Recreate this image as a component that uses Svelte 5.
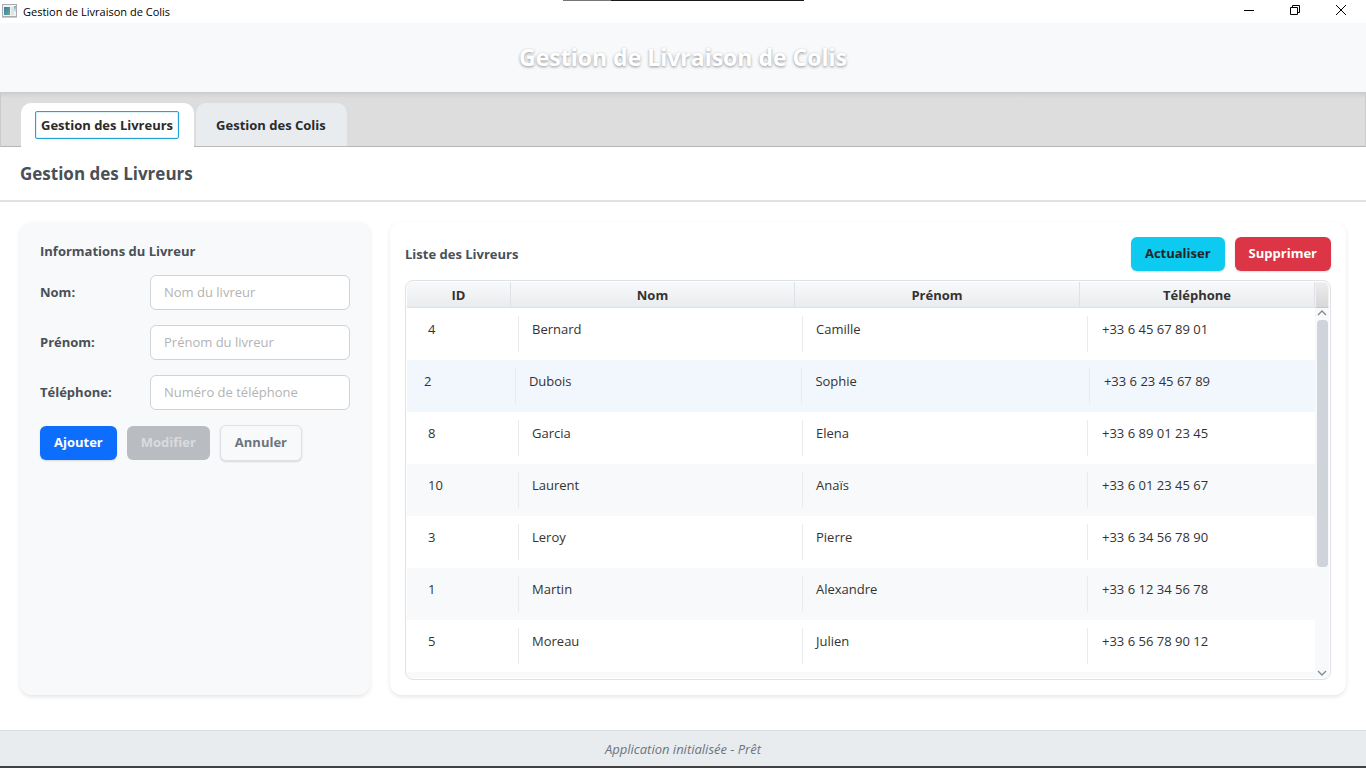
<script>
  const fields = [
    { id: 'nom', label: 'Nom:', placeholder: 'Nom du livreur', type: 'text' },
    { id: 'prenom', label: 'Prénom:', placeholder: 'Prénom du livreur', type: 'text' },
    { id: 'telephone', label: 'Téléphone:', placeholder: 'Numéro de téléphone', type: 'tel' }
  ];

  const couriers = [
    { id: 4, nom: 'Bernard', prenom: 'Camille', tel: '+33 6 45 67 89 01' },
    { id: 2, nom: 'Dubois', prenom: 'Sophie', tel: '+33 6 23 45 67 89' },
    { id: 8, nom: 'Garcia', prenom: 'Elena', tel: '+33 6 89 01 23 45' },
    { id: 10, nom: 'Laurent', prenom: 'Anaïs', tel: '+33 6 01 23 45 67' },
    { id: 3, nom: 'Leroy', prenom: 'Pierre', tel: '+33 6 34 56 78 90' },
    { id: 1, nom: 'Martin', prenom: 'Alexandre', tel: '+33 6 12 34 56 78' },
    { id: 5, nom: 'Moreau', prenom: 'Julien', tel: '+33 6 56 78 90 12' }
  ];

  let active = $state(2);
</script>

<div class="window">
  <div class="edge-top"></div>
  <div class="titlebar">
    <svg class="app-icon" width="16" height="14" viewBox="0 0 16 14" aria-hidden="true">
      <defs>
        <linearGradient id="pane" x1="0" y1="0" x2="1" y2="1">
          <stop offset="0" stop-color="#3f76ad" />
          <stop offset="1" stop-color="#5fb088" />
        </linearGradient>
        <linearGradient id="pane-small" x1="0" y1="0" x2="0" y2="1">
          <stop offset="0" stop-color="#6fb59a" />
          <stop offset="1" stop-color="#e8eaec" />
        </linearGradient>
      </defs>
      <rect x="0.5" y="0.5" width="14" height="12" fill="#f1f2f4" stroke="#a9adb3" />
      <rect x="2" y="3" width="6" height="8" fill="url(#pane)" />
      <rect x="9" y="3" width="3" height="8" fill="#dfe2e6" />
      <rect x="12" y="2" width="2" height="6" fill="url(#pane-small)" />
      <path d="M0 13.5h15" stroke="#c9ccd0" />
    </svg>
    <span class="window-name">Gestion de Livraison de Colis</span>
    <div class="window-controls">
      <button aria-label="Réduire">
        <svg width="12" height="12" viewBox="0 0 12 12"><path d="M1 6.5h10" stroke="#000" /></svg>
      </button>
      <button aria-label="Restaurer">
        <svg width="12" height="12" viewBox="0 0 12 12" fill="none" stroke="#000">
          <path d="M1.5 3.5h7v7h-7zM3.5 3.500v-2h7v7h-2" />
        </svg>
      </button>
      <button aria-label="Fermer">
        <svg width="12" height="12" viewBox="0 0 12 12"><path d="M1 1l10 10M11 1L1 11" stroke="#000" /></svg>
      </button>
    </div>
  </div>

  <header><h1>Gestion de Livraison de Colis</h1></header>

  <div class="tabs" role="tablist">
    <button class="tab selected" role="tab" aria-selected="true"><span>Gestion des Livreurs</span></button>
    <button class="tab" role="tab" aria-selected="false"><span>Gestion des Colis</span></button>
  </div>

  <h2>Gestion des Livreurs</h2>

  <main>
    <form class="card form-card" onsubmit={(e) => e.preventDefault()}>
      <h3>Informations du Livreur</h3>
      <div class="fields">
        {#each fields as field}
          <label for={field.id}>{field.label}</label>
          <input id={field.id} type={field.type} placeholder={field.placeholder} />
        {/each}
      </div>
      <div class="actions">
        <button class="btn primary">Ajouter</button>
        <button class="btn disabled" type="button" disabled>Modifier</button>
        <button class="btn outline" type="reset">Annuler</button>
      </div>
    </form>

    <section class="card list-card">
      <div class="list-head">
        <h3>Liste des Livreurs</h3>
        <div class="list-actions">
          <button class="btn info">Actualiser</button>
          <button class="btn danger">Supprimer</button>
        </div>
      </div>

      <div class="table-frame">
        <div class="viewport">
          <table>
            <thead>
              <tr>
                <th>ID</th>
                <th>Nom</th>
                <th>Prénom</th>
                <th>Téléphone</th>
              </tr>
            </thead>
            <tbody>
              {#each couriers as c}
                <tr class:active={c.id === active} onmouseenter={() => (active = c.id)}>
                  <td>{c.id}</td>
                  <td>{c.nom}</td>
                  <td>{c.prenom}</td>
                  <td>{c.tel}</td>
                </tr>
              {/each}
              <tr></tr>
            </tbody>
          </table>
        </div>
        <div class="scroll">
          <div class="corner"></div>
          <svg width="10" height="10" viewBox="0 0 10 10" fill="none" stroke="#85898d">
            <path d="M1 7l4-4 4 4" stroke-width="1.300" />
          </svg>
          <div class="track"><div class="thumb"></div></div>
          <svg width="10" height="10" viewBox="0 0 10 10" fill="none" stroke="#85898d">
            <path d="M1 3l4 4 4-4" stroke-width="1.300" />
          </svg>
        </div>
      </div>
    </section>
  </main>

  <footer>Application initialisée - Prêt</footer>
  <div class="edge-bottom"></div>
</div>

<style>
  :global(body) {
    margin: 0;
  }

  .window,
  .window * {
    box-sizing: border-box;
  }

  .window {
    position: relative;
    display: flex;
    flex-direction: column;
    height: 100vh;
    min-height: 560px;
    background: #fff;
    color: #333;
    font-family: 'Open Sans', 'Noto Sans', sans-serif;
    font-size: 13px;
    line-height: 18px;
  }

  button,
  input {
    font-family: inherit;
    font-size: 13px;
    line-height: 18px;
  }

  h1,
  h2,
  h3 {
    margin: 0;
  }

  .edge-top {
    position: absolute;
    top: 0;
    left: 563px;
    width: 241px;
    height: 1px;
    background: linear-gradient(90deg, #777 48px, #1b191b 48px);
  }

  .titlebar {
    display: flex;
    align-items: center;
    height: 23px;
    padding: 0 2px;
    color: #000;
  }

  .app-icon {
    margin-bottom: 2px;
  }

  .window-name {
    margin-left: 5px;
    font-size: 11px;
  }

  .window-controls {
    display: flex;
    margin-left: auto;
  }

  .window-controls button {
    display: grid;
    place-items: center;
    width: 46px;
    height: 23px;
    padding: 0 0 3px;
    border: 0;
    background: none;
  }

  header {
    display: flex;
    align-items: center;
    justify-content: center;
    height: 69px;
    padding-bottom: 2px;
    background: #f8f9fb;
  }

  h1 {
    color: #fff;
    font-size: 23px;
    font-weight: 700;
    line-height: 32px;
    text-shadow: 0 1px 3px rgba(0, 0, 0, 0.42);
  }

  .tabs {
    display: flex;
    align-items: flex-end;
    gap: 2px;
    height: 55px;
    padding: 0 20px;
    border: 1px solid #cbcbcb;
    border-bottom-color: #b5b5b5;
    background: linear-gradient(#cfcfcf, #ddd 5px);
  }

  .tab {
    height: 44px;
    margin-bottom: -1px;
    padding: 0 15px 0 14px;
    border: 0;
    border-radius: 10px 10px 0 0;
    background: #e9ecef;
    color: #2b2b2b;
    font-weight: 700;
    box-shadow: inset 0 -1px #bbb;
  }

  .tab span {
    display: block;
    padding: 4px 5px;
    border: 1px solid transparent;
    border-radius: 2px;
  }

  .tab.selected {
    background: #fff;
    box-shadow: none;
  }

  .tab.selected span {
    border-color: #1fa5d6;
    box-shadow: inset 0 0 0 1px #dff1f9;
  }

  h2 {
    height: 55px;
    padding: 15px 20px;
    border-bottom: 2px solid #dee2e6;
    color: #495057;
    font-size: 17px;
    line-height: 24px;
  }

  main {
    display: flex;
    flex: 1;
    gap: 20px;
    min-height: 0;
    padding: 20px 20px 35px;
  }

  .card {
    border-radius: 12px;
    box-shadow: 0 2px 4px rgba(0, 0, 0, 0.1);
  }

  h3 {
    color: #495057;
    font-size: 13px;
    line-height: 18px;
  }

  .form-card {
    flex: none;
    width: 350px;
    padding: 20px;
    background: #f8f9fa;
  }

  .fields {
    display: grid;
    grid-template-columns: 95px 1fr;
    gap: 15px;
    align-items: center;
    margin-top: 15px;
  }

  label {
    padding-bottom: 2px;
    color: #495057;
    font-weight: 700;
  }

  input {
    width: 100%;
    height: 35px;
    padding: 0 13px 2px;
    border: 1px solid #ced4da;
    border-radius: 6px;
    background: #fff;
    color: #333;
  }

  input::placeholder {
    color: #b3b3b3;
  }

  .actions {
    display: flex;
    align-items: center;
    gap: 10px;
    margin-top: 15px;
  }

  .btn {
    height: 34px;
    padding: 0 14px 2px;
    border: 0;
    border-radius: 6px;
    color: #fff;
    font-weight: 700;
    box-shadow: 0 1px 2px rgba(0, 0, 0, 0.14);
  }

  .primary {
    background: #0d6efd;
  }

  .disabled {
    background: #b9bdc2;
    color: #d9dbde;
    box-shadow: none;
  }

  .outline {
    height: 36px;
    border: 1px solid #dee2e6;
    background: #f8f9fa;
    color: #6c757d;
  }

  .info {
    background: #0dcaf0;
    color: #212529;
  }

  .danger {
    background: #dc3545;
  }

  .list-card {
    display: flex;
    flex: 1;
    flex-direction: column;
    min-width: 0;
    padding: 15px;
    background: #fff;
  }

  .list-head {
    display: flex;
    align-items: center;
    justify-content: space-between;
  }

  .list-actions {
    display: flex;
    gap: 10px;
  }

  .table-frame {
    display: flex;
    flex: 1;
    min-height: 0;
    margin-top: 9px;
    padding: 1px;
    border: 1px solid #dee2e6;
    border-radius: 8px;
    overflow: hidden;
  }

  .viewport {
    flex: 1;
    min-width: 0;
    overflow: hidden;
  }

  table,
  thead,
  tbody {
    display: block;
  }

  tr {
    display: grid;
    grid-template-columns: 104fr 284fr 285fr 235fr;
  }

  th {
    height: 26px;
    padding: 4px 0;
    border-right: 1px solid #dee2e6;
    border-bottom: 1px solid #dee2e6;
    background: linear-gradient(#f8f9fa, #e9ecef);
    color: #333;
    font-weight: 700;
    text-align: center;
  }

  tbody tr {
    height: 52px;
    margin-right: -8px;
    padding: 8px 0 8px 8px;
  }

  tbody tr:nth-child(even) {
    background: #f8f9fa;
  }

  tbody tr.active {
    margin-right: -12px;
    padding-left: 4px;
    background: #f2f7fe;
  }

  td {
    padding: 4px 13px;
    border-right: 1px solid #e9ecef;
  }

  td:last-child {
    padding-left: 14px;
    border-right: 0;
  }

  .scroll {
    display: flex;
    flex: none;
    flex-direction: column;
    align-items: center;
    width: 14px;
    background: #f8f9fa;
  }

  .corner {
    align-self: stretch;
    height: 26px;
    border: 1px solid #f1f1f1;
    border-bottom-color: #c8c8c8;
    border-radius: 0 6px 0 0;
    background: linear-gradient(#ececec, #d8d8d8);
  }

  .track {
    flex: 1;
    width: 11px;
    padding-top: 2px;
  }

  .thumb {
    height: 71%;
    border-radius: 4px;
    background: #ced4da;
  }

  footer {
    height: 36px;
    padding: 9px;
    border-top: 1px solid #d9dee2;
    background: #e9ecef;
    color: #6c757d;
    font-style: italic;
    line-height: 18px;
    text-align: center;
  }

  .edge-bottom {
    height: 2px;
    background: #414042;
  }
</style>
